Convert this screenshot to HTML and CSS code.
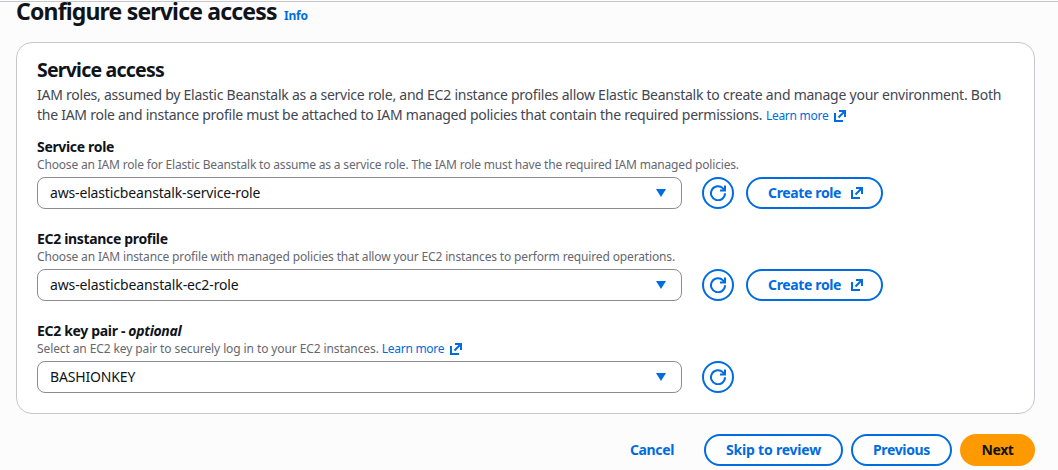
FILE: index.html
```
<!DOCTYPE html>
<html lang="en">
<head>
<meta charset="utf-8">
<title>Configure service access</title>
<link rel="stylesheet" href="styles.css">
</head>
<body>
<svg class="symbols" width="0" height="0" aria-hidden="true">
  <symbol id="external" viewBox="0 0 12 12"><path d="M5 1h6v6M10.7 1.3 4.5 7.5M1 3v8h8"/></symbol>
  <symbol id="refresh" viewBox="0 0 16 16"><path d="M15 8.3a7 7 0 1 1-2-4.9l2 2.1M15 .5v5h-5"/></symbol>
</svg>
<main class="page">
  <header class="page-header"><h1 class="title">Configure service access</h1><a class="info">Info</a></header>
  <section class="card">
    <h2 class="card-title">Service access</h2>
    <p class="desc"><span class="desc-a">IAM roles, assumed by Elastic Beanstalk as a service role, and EC2 instance profiles allow Elastic Beanstalk to create and manage your environment. Both</span><br><span class="desc-b">the IAM role and instance profile must be attached to IAM managed policies that contain the required permissions.</span> <a class="link">Learn more</a><svg class="ext-sm"><use href="#external"/></svg></p>

    <div class="field">
      <div class="label">Service role</div>
      <div class="hint hint-role">Choose an IAM role for Elastic Beanstalk to assume as a service role. The IAM role must have the required IAM managed policies.</div>
      <div class="row">
        <div class="select"><span class="value">aws-elasticbeanstalk-service-role</span><svg class="caret" viewBox="0 0 10 8"><path d="M0 0h10L5 8z"/></svg></div>
        <button class="btn round" aria-label="Refresh"><svg class="refresh"><use href="#refresh"/></svg></button>
        <button class="btn create"><span>Create role</span><svg class="ext"><use href="#external"/></svg></button>
      </div>
    </div>

    <div class="field">
      <div class="label">EC2 instance profile</div>
      <div class="hint hint-profile">Choose an IAM instance profile with managed policies that allow your EC2 instances to perform required operations.</div>
      <div class="row">
        <div class="select"><span class="value value-ec2">aws-elasticbeanstalk-ec2-role</span><svg class="caret" viewBox="0 0 10 8"><path d="M0 0h10L5 8z"/></svg></div>
        <button class="btn round" aria-label="Refresh"><svg class="refresh"><use href="#refresh"/></svg></button>
        <button class="btn create"><span>Create role</span><svg class="ext"><use href="#external"/></svg></button>
      </div>
    </div>

    <div class="field">
      <div class="label">EC2 key pair - <em>optional</em></div>
      <div class="hint hint-key"><span>Select an EC2 key pair to securely log in to your EC2 instances.</span> <a class="link">Learn more</a><svg class="ext-sm"><use href="#external"/></svg></div>
      <div class="row">
        <div class="select"><span class="value">BASHIONKEY</span><svg class="caret" viewBox="0 0 10 8"><path d="M0 0h10L5 8z"/></svg></div>
        <button class="btn round" aria-label="Refresh"><svg class="refresh"><use href="#refresh"/></svg></button>
      </div>
    </div>
  </section>
  <footer class="actions">
    <button class="btn plain">Cancel</button>
    <button class="btn skip">Skip to review</button>
    <button class="btn previous">Previous</button>
    <button class="btn next">Next</button>
  </footer>
</main>
</body>
</html>
```
FILE: styles.css
```
* { box-sizing: border-box; }
body { margin: 0; background: #fcfcfd; color: #0f141a; font: 14px/20px "Noto Sans", sans-serif; overflow: hidden; }
.symbols { position: absolute; }
.page { height: 470px; border-top: 1px solid transparent; background: linear-gradient(#c6c6cd, #c6c6cd) 0 0 / 100% 1px no-repeat; overflow: hidden; padding: 0 23px 0 16px; }
.page-header { height: 41px; display: flex; align-items: baseline; gap: 7px; white-space: nowrap; }
.title { margin: -5px 0 0; font-size: 23px; line-height: 30px; font-weight: 700; width: 261px; letter-spacing: -.82px; }
.info { color: #006ce0; font-size: 12px; font-weight: 700; letter-spacing: -.2px; }
.card { height: 372px; border: 1px solid #c6c6cd; border-radius: 16px; background: #fff; padding: 15px 20px 20px; white-space: nowrap; }
.card-title { margin: 0; font-size: 19.5px; line-height: 24px; font-weight: 700; letter-spacing: -.78px; }
.desc { margin: 3px 0 11px; color: #424650; }
.desc-a { letter-spacing: -.243px; }
.desc-b { letter-spacing: -.26px; }
.link { color: #006ce0; font-size: 12px; letter-spacing: -.28px; }
.field { margin-bottom: 20px; }
.label { font-weight: 700; letter-spacing: -.33px; }
.hint { height: 20px; font-size: 12px; line-height: 16px; color: #656871; }
.hint-role { letter-spacing: -.176px; }
.hint-profile { letter-spacing: -.15px; }
.hint-key { letter-spacing: -.1px; }
.row { display: flex; }
.select { width: 645px; height: 32px; border: 1px solid #8c8c94; border-radius: 8px; margin-right: 20px; padding: 0 15px 0 12px; display: flex; align-items: center; justify-content: space-between; }
.value { letter-spacing: -.16px; }
.value-ec2 { letter-spacing: -.13px; }
.caret { width: 10px; height: 8px; fill: #006ce0; }
.btn { height: 32px; border: 2px solid #006ce0; border-radius: 16px; background: #fff; color: #006ce0; font: 700 14px/20px "Noto Sans", sans-serif; letter-spacing: -.36px; padding: 0; display: flex; align-items: center; justify-content: center; white-space: nowrap; }
.round { width: 32px; margin-right: 12px; }
.create { width: 137px; justify-content: space-between; padding: 0 18px 0 20px; }
.refresh { width: 16px; height: 16px; }
.ext, .ext-sm { width: 12px; height: 12px; }
.ext-sm { margin-left: 6px; vertical-align: -2px; }
.refresh, .ext, .ext-sm { fill: none; stroke: #006ce0; stroke-width: 2px; }
.actions { display: flex; justify-content: flex-end; gap: 8px; padding-top: 20px; }
.plain { border: 0; background: none; width: 44px; margin-right: 22px; }
.skip { width: 139px; letter-spacing: -.2px; }
.previous { width: 101px; }
.next { width: 75px; border: 0; background: #ff9900; color: #0f141a; }
```
